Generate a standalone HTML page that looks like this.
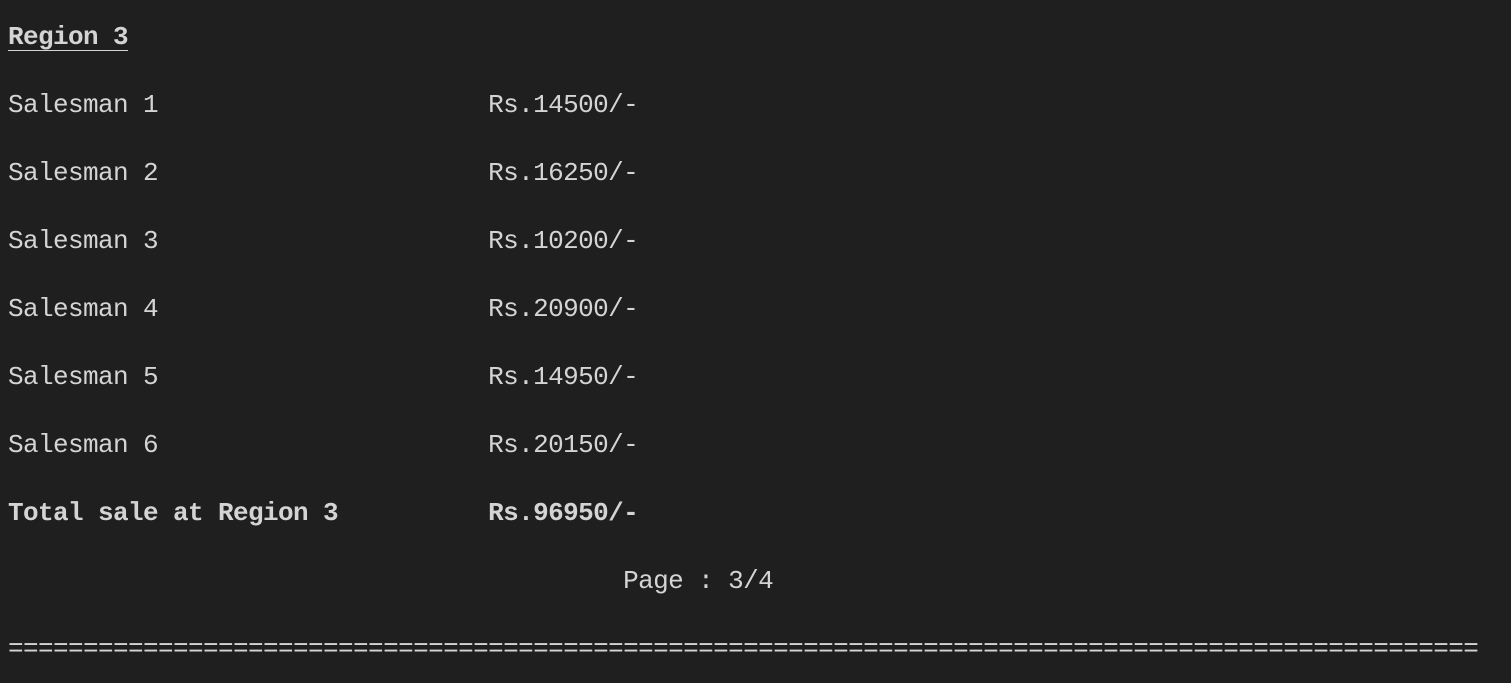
<!DOCTYPE html>
<html><head><style>
html,body{margin:0;padding:0;background:#1f1f1f;width:1511px;height:667px;overflow:hidden}
pre{margin:0;position:absolute;left:8px;top:3px;font-family:"Liberation Mono",monospace;font-size:26px;letter-spacing:-0.6px;line-height:68px;color:#d4d4d4;white-space:pre}
b{font-weight:bold}
u{text-decoration:underline;text-underline-offset:6px;text-decoration-thickness:1px}
</style></head><body>
<pre><b><u>Region 3</u></b>
Salesman 1                      Rs.14500/-
Salesman 2                      Rs.16250/-
Salesman 3                      Rs.10200/-
Salesman 4                      Rs.20900/-
Salesman 5                      Rs.14950/-
Salesman 6                      Rs.20150/-
<b>Total sale at Region 3          Rs.96950/-</b>
                                         Page : 3/4
==================================================================================================</pre>
</body></html>
